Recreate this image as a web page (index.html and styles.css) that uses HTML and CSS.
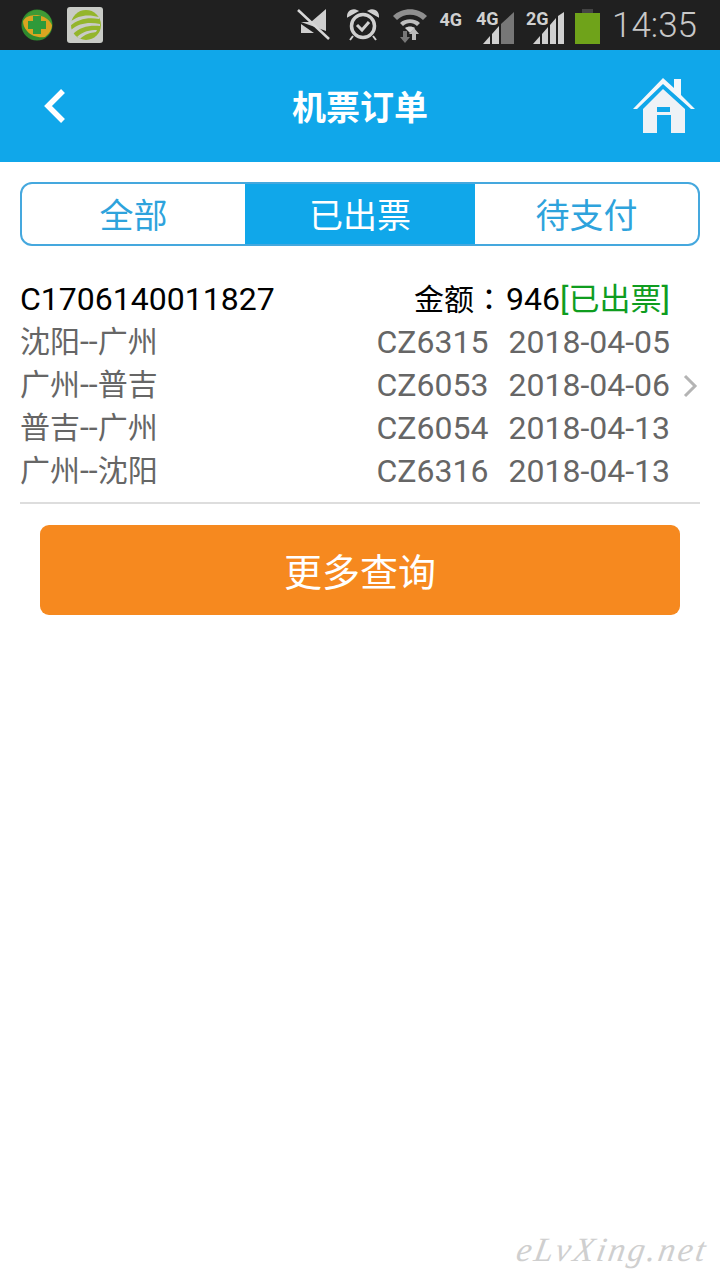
FILE: index.html
```html
<!DOCTYPE html>
<html lang="zh-CN">

<head>
    <meta charset="UTF-8">
    <meta name="viewport" content="width=device-width, initial-scale=1.0">
    <title>机票订单</title>
    <link rel="stylesheet" href="styles.css">
</head>

<body>
    <div class="page">
        <!-- barra de estado -->
        <div class="status">
            <svg class="app-a" width="32" height="32" viewBox="0 0 32 32">
                <circle cx="16" cy="16" r="15.500" fill="#2f8a2e"/>
                <path d="M2 12C6 5 14 3 22 6c5 2 8 6 9 10 0 5-3 9-7 12-7 1-14-1-18-6-3-3-4-7-4-10z" fill="#d9a520"/>
                <path d="M16 1a15 15 0 0 1 15 15c-3-6-8-9-15-10-5 0-9 1-12 3 3-5 7-8 12-8z" fill="#3f9a35"/>
                <path d="M12 7h8v5h5v8h-5v5h-8v-5H7v-8h5z" fill="#2f9a3a"/>
            </svg>
            <svg class="app-b" width="36" height="36" viewBox="0 0 36 36">
                <rect width="36" height="36" rx="3" fill="#c9cbc6"/>
                <circle cx="19" cy="18" r="15" fill="#94b52c"/>
                <path d="M3 15C11 8 21 7 32 10L32 12C21 10 11 12 3 19zM4 23C12 16 22 15 33 17L33 19C22 18 13 20 6 27zM10 30C16 24 23 23 30 23L29 25C23 26 18 27 13 32z" fill="#c9cbc6"/>
            </svg>
            <div class="status-right">
                <svg class="mute" width="34" height="34" viewBox="0 0 34 34">
                    <path d="M4 14H14L29 1V23zM4 16V25H17z" fill="#cfcfcf"/>
                    <path d="M1 2L32 31" stroke="#d8d8d8" stroke-width="2.500"/>
                </svg>
                <svg class="alarm" width="32" height="34" viewBox="0 0 32 34">
                    <circle cx="16" cy="18" r="11.500" fill="none" stroke="#d0d0d0" stroke-width="3.500"/>
                    <path d="M1 8a6 6 0 0 1 9-5zM31 8a6 6 0 0 0-9-5zM6 28l-3 4M26 28l3 4" fill="#d0d0d0" stroke="#d0d0d0" stroke-width="2"/>
                    <path d="M10 17l5 5 7-8" fill="none" stroke="#d0d0d0" stroke-width="3"/>
                </svg>
                <svg class="wifi" width="36" height="36" viewBox="0 0 36 36">
                    <path d="M1 9C10 0 26 0 35 9l-4 4C24 6 12 6 5 13z" fill="#8f8f8f"/>
                    <path d="M8 16C13 11 23 11 28 16l-3 3C21 15 15 15 11 19z" fill="#bdbdbd"/>
                    <path d="M13 21c3-2 7-2 10 0l-5 5z" fill="#cfcfcf"/>
                    <path d="M11 24h4v6h3l-5 6-5-6h3z" fill="#777"/>
                    <path d="M22 21l5 6h-3v6h-4v-6h-3z" fill="#bbb"/>
                </svg>
                <span class="net net-first">4G</span>
                <div class="signal">
                    <span class="net">4G</span>
                    <svg width="32" height="32" viewBox="0 0 32 32">
                        <path d="M0 32l7-8v8zM9 32V22l7-8v18z" fill="#d0d0d0"/>
                        <path d="M18 32V12l13-12v32z" fill="#777"/>
                    </svg>
                </div>
                <div class="signal">
                    <span class="net">2G</span>
                    <svg width="32" height="32" viewBox="0 0 32 32">
                        <path d="M0 32l7-8v8zM9 32V22l6-7v17zM17 32V13l6-7v26zM25 32V4l6-4v32z" fill="#d0d0d0"/>
                    </svg>
                </div>
                <div class="battery"></div>
                <span class="time">14:35</span>
            </div>
        </div>

        <div class="header">
            <svg class="back" width="24" height="36" viewBox="0 0 24 36">
                <path d="M20 3L5 18l15 15" fill="none" stroke="#fff" stroke-width="5.500"/>
            </svg>
            <h1 class="title">机票订单</h1>
            <svg class="home" width="62" height="56" viewBox="0 0 62 56">
                <path d="M0 31L30 0l11 10V1h7v16l14 14h-4L30 6 4 31z" fill="#f4f7fa"/>
                <path d="M10 31L30 11l22 20v24H38V37H24v18H10zM24 29v5h13v-5z" fill="#eef2f6" fill-rule="evenodd"/>
            </svg>
        </div>

        <div class="tabs">
            <div class="tab">全部</div>
            <div class="tab tab-on">已出票</div>
            <div class="tab">待支付</div>
        </div>

        <div class="order">
            <div class="order-info">
                <div class="order-head">
                    <span>C1706140011827</span>
                    <span><span class="cn">金额</span><span class="cn colon" lang="zh-TW">：</span>946<span class="state">[<span class="cn">已出票</span>]</span></span>
                </div>
                <div class="leg"><span class="route"><span class="cn">沈阳</span>--<span class="cn">广州</span></span><span class="flight">CZ6315</span><span>2018-04-05</span></div>
                <div class="leg"><span class="route"><span class="cn">广州</span>--<span class="cn">普吉</span></span><span class="flight">CZ6053</span><span>2018-04-06</span></div>
                <div class="leg"><span class="route"><span class="cn">普吉</span>--<span class="cn">广州</span></span><span class="flight">CZ6054</span><span>2018-04-13</span></div>
                <div class="leg"><span class="route"><span class="cn">广州</span>--<span class="cn">沈阳</span></span><span class="flight">CZ6316</span><span>2018-04-13</span></div>
            </div>
            <svg class="arrow" width="16" height="24" viewBox="0 0 16 24">
                <path d="M3 2l10 10L3 22" fill="none" stroke="#b4b4b4" stroke-width="3"/>
            </svg>
        </div>

        <button class="more">更多查询</button>

        <div class="mark">eLvXing.net</div>
    </div>
</body>

</html>
```

FILE: styles.css
```css
* {
    box-sizing: border-box;
}

html,
body {
    margin: 0;
    background-color: #fff;
}

body {
    font-family: Roboto, "Noto Sans CJK SC", sans-serif;
}

.page {
    position: relative;
    width: 720px;
    height: 1280px;
    overflow: hidden;
}

.status {
    display: flex;
    align-items: center;
    height: 50px;
    padding-left: 21px;
    background-color: #202020;
}

.app-b {
    margin-left: 14px;
}

.status-right {
    display: flex;
    align-items: center;
    margin-left: auto;
    padding-right: 23px;
}

.alarm {
    margin-left: 16px;
}

.wifi {
    margin-left: 13px;
}

.net {
    font-size: 18px;
    font-weight: 700;
    color: #d0d0d0;
}

.net-first {
    align-self: flex-start;
    margin: 4px 0 0 11px;
}

.signal {
    position: relative;
    width: 32px;
    height: 32px;
    margin-left: 21px;
    margin-top: 6px;
}

.signal .net {
    position: absolute;
    left: -7px;
    top: -4px;
    z-index: 1;
    text-shadow: 0 0 2px #202020;
}

.signal + .signal {
    margin-left: 18px;
}

.battery {
    position: relative;
    width: 25px;
    height: 31px;
    margin: 6px 0 0 10px;
    background-color: #6fa31a;
}

.battery::before {
    content: "";
    position: absolute;
    top: -4px;
    left: 7px;
    width: 11px;
    height: 4px;
    background-color: #444;
}

.time {
    margin-left: 12px;
    font-size: 35px;
    font-weight: 300;
    color: #c8c8c8;
}

.header {
    display: grid;
    grid-template-columns: 1fr auto 1fr;
    align-items: center;
    height: 112px;
    padding: 0 25px;
    background-color: #10a7ea;
}

.title {
    margin: -2px 0 0;
    font-size: 34px;
    font-weight: 700;
    color: #fff;
}

.back {
    margin: -1px 0 0 18px;
}

.home {
    justify-self: end;
    margin-top: -1px;
}

.tabs {
    display: flex;
    height: 64px;
    margin: 20px 20px 0;
    overflow: hidden;
    border: 2px solid #45a8de;
    border-radius: 12px;
}

.tab {
    flex: 1;
    padding-top: 2px;
    font-size: 34px;
    line-height: 60px;
    text-align: center;
    color: #2ea3dc;
}

.tab-on {
    flex: 0 0 230px;
    background-color: #10a7ea;
    color: #fff;
}

.order {
    display: flex;
    align-items: center;
    margin: 32px 20px 0;
    padding-bottom: 9px;
    border-bottom: 2px solid #ddd;
}

.order-info {
    flex: 1;
    padding-right: 12px;
    font-size: 32px;
    line-height: 43px;
    color: #666;
}

.order-head {
    display: flex;
    justify-content: space-between;
    align-items: baseline;
    height: 43px;
    line-height: 39px;
    color: #000;
}

.cn {
    font-size: 30px;
}

.colon {
    margin-right: 2px;
    font-family: "Noto Sans CJK TC", sans-serif;
}

.state {
    color: #0f9d1f;
}

.state .cn {
    font-size: 31px;
}

.leg {
    display: flex;
    height: 43px;
}

.route {
    flex: 1;
    line-height: 41px;
}

.flight {
    margin-right: 20px;
}

.arrow {
    margin-right: 2px;
}

.more {
    display: block;
    width: 640px;
    height: 90px;
    margin: 21px 40px 0;
    padding: 0 0 2px;
    border: none;
    border-radius: 9px;
    background-color: #f6891f;
    font-family: inherit;
    font-size: 38px;
    color: #fff;
}

.mark {
    position: absolute;
    right: 12px;
    bottom: 11px;
    font-family: "Liberation Serif", serif;
    font-style: italic;
    font-size: 34px;
    letter-spacing: 2.500px;
    color: #cfcfcf;
    transform: skewX(-10deg);
}
```
